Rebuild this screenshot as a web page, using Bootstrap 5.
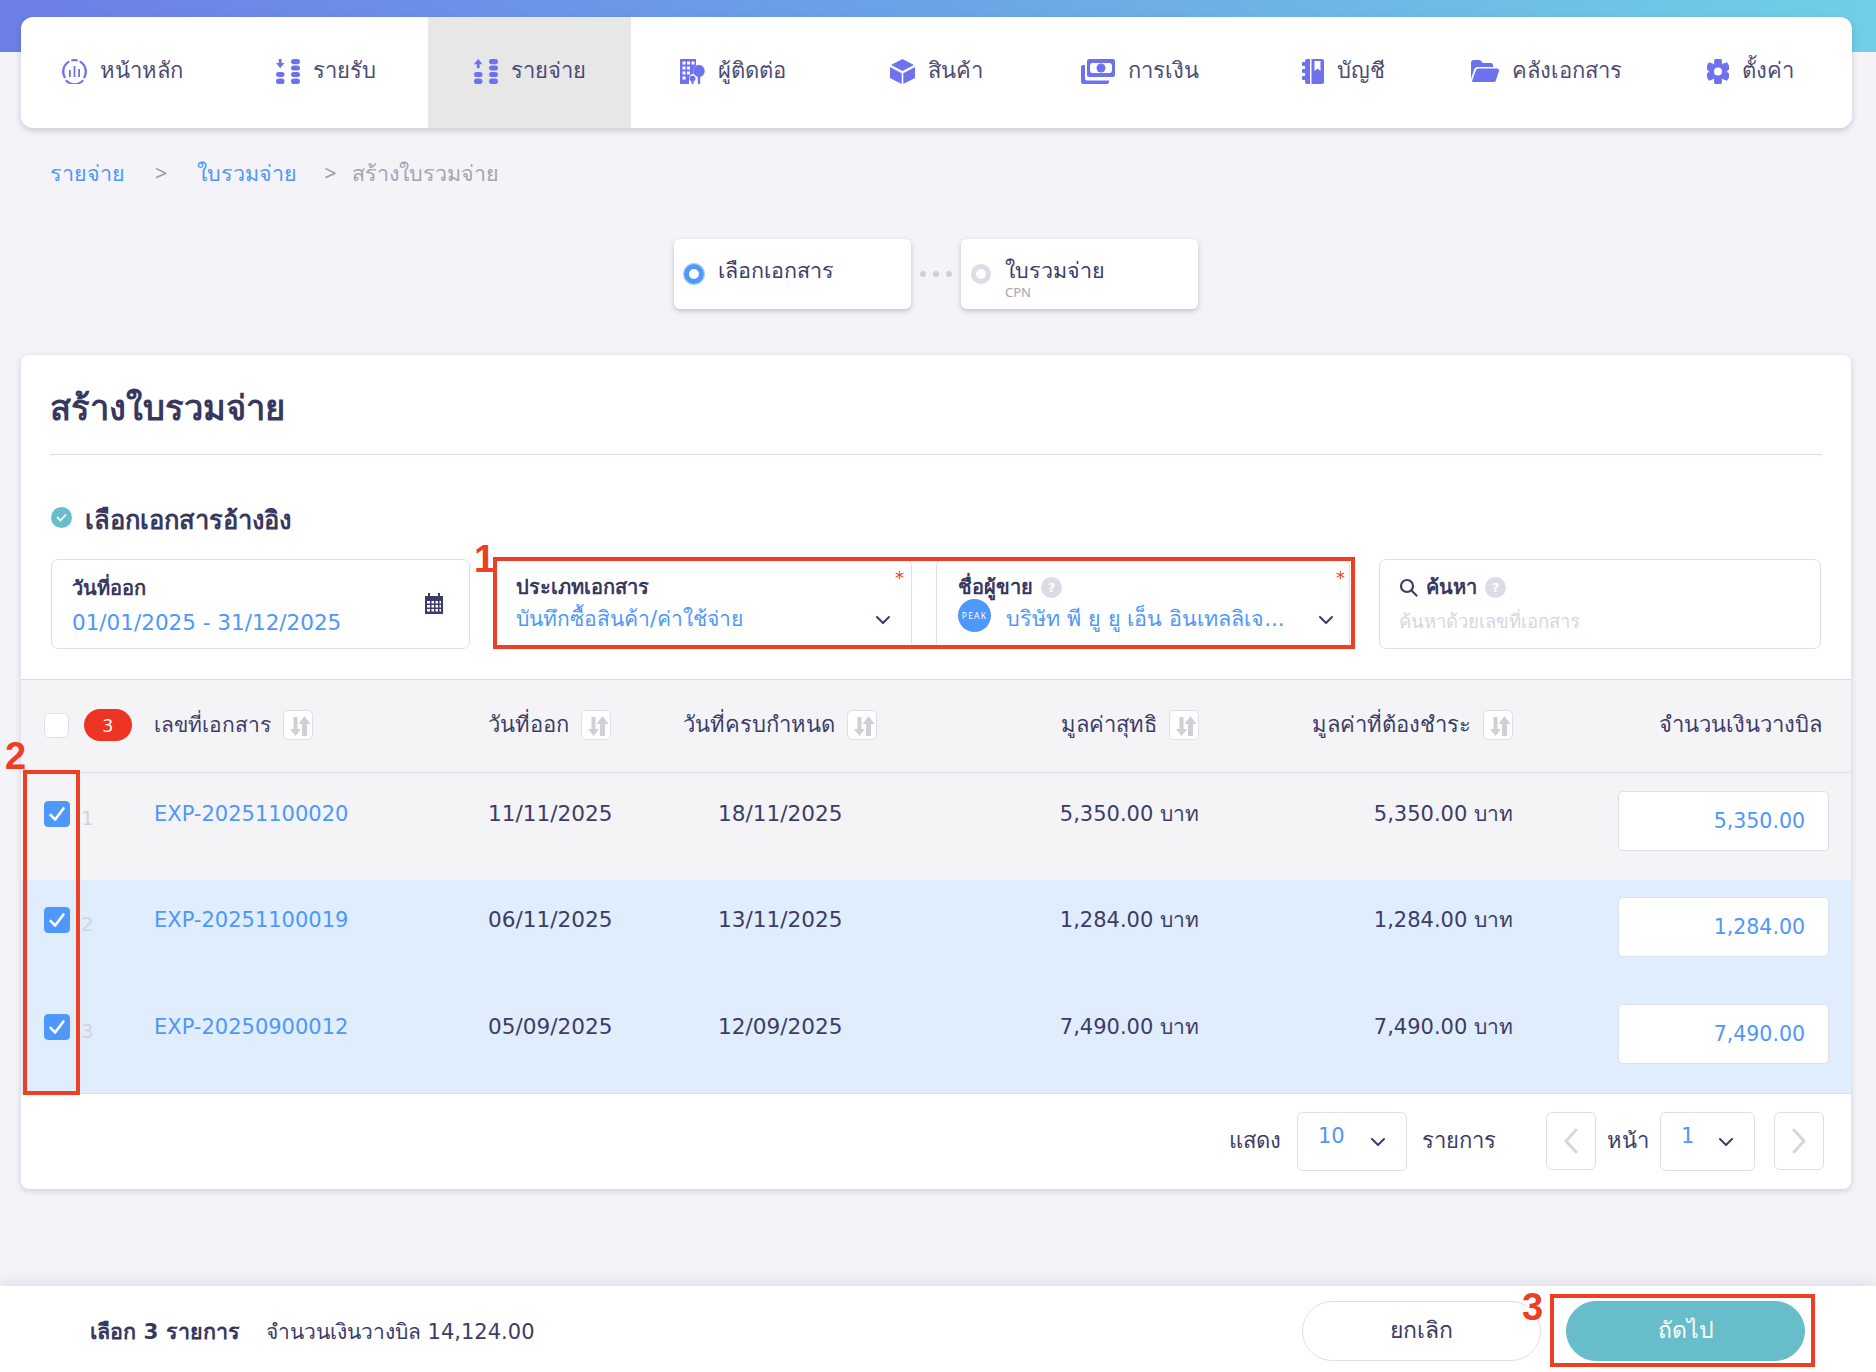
<!DOCTYPE html>
<html lang="th">
<head>
<meta charset="utf-8">
<title>สร้างใบรวมจ่าย</title>
<link href="https://cdn.jsdelivr.net/npm/bootstrap@5.3.0/dist/css/bootstrap.min.css" rel="stylesheet">
<style>
:root{--ink:#3c3c68;--blue:#4e97fb;--line:#dfdfe9;--bgp:#f3f3f8;--ann:#ee3e23;}
html,body{height:100%;}
body{font-family:"DejaVu Sans","Noto Sans","Liberation Sans",sans-serif;background:var(--bgp);color:var(--ink);font-size:21px;position:relative;overflow:hidden;line-height:30px;}
.page-wrap{height:1372px;}
.top-band{background:linear-gradient(90deg,#6c7ee8 0%,#6ba4e6 50%,#70cfe4 100%) no-repeat;background-size:100% 52px;padding:17px 24px 0 21px;}
.main-nav{height:111px;background:#fff;border-radius:12px;box-shadow:0 3px 6px rgba(60,60,100,.22);overflow:hidden;}
.nav-cell{flex:1 1 0;gap:13px;color:#4b4b74;font-size:22px;height:100%;padding-bottom:3px;}
.nav-cell.is-on{background:#e7e7e8;}
.nav-ico{fill:#6f72ef;display:block;}
.crumbs{font-family:"Noto Sans",sans-serif;padding:30px 0 0 29px;height:49px;box-sizing:content-box;margin-bottom:0;font-size:21.500px;}
.crumb-link{color:var(--blue);}
.crumb-sep{color:#9a9aac;margin:0 30px;}
.crumb-sep.tight{margin:0 15px 0 27px;}
.crumb-cur{color:#a4a4b4;}
.content{padding:0 25px 0 21px;}
.stepper{margin-top:32px;margin-bottom:46px;}
.step-box{width:237px;height:70px;background:#fff;border-radius:6px;box-shadow:0 2px 5px rgba(60,60,100,.28);padding:16px 10px;gap:14px;}
.step-dots{width:50px;gap:7px;}
.step-dots i{width:6px;height:6px;border-radius:50%;background:#cfcfd8;display:block;}
.step-dot{width:20px;height:20px;border-radius:50%;border:5px solid #dcdce6;flex:none;margin-top:9px;}
.step-dot.on{border-color:#4e97fb;box-shadow:0 0 0 1px #a9cdfc;}
.step-sub{font-family:"Noto Sans",sans-serif;font-size:13px;line-height:14px;color:#a4a4b4;}
.step-name{line-height:28px;font-size:21.500px;margin-top:2px;}
.doc-card{background:#fff;border-radius:8px;box-shadow:0 2px 6px rgba(60,60,100,.2);height:834px;overflow:hidden;}
.doc-head{margin:0 29px 0 29px;height:100px;border-bottom:1px solid #dcdce4;padding-top:28px;}
.doc-title{font-size:34.500px;font-weight:600;line-height:50px;margin:0;color:#38385f;}
.sec-head{padding:47px 0 0 30px;gap:13px;font-size:25.500px;font-weight:600;line-height:36px;height:104px;align-items:flex-start;color:#38385f;}
.sec-check{width:21px;height:21px;margin-top:5px;flex:none;}
.filter-row{height:120px;padding-left:30px;}
.f-box{height:90px;border:1px solid var(--line);border-radius:7px;position:relative;}
.f-date{width:419px;margin-right:25px;padding:13px 20px;}
.f-type{width:417px;margin-right:24px;padding:12px 20px;}
.f-vendor{width:414px;margin-right:29px;padding:12px 21px;}
.f-search{width:442px;padding:12px 19px;}
.f-label{font-size:20px;font-weight:600;line-height:30px;color:#38385f;}
.f-val{color:var(--blue);font-size:21px;line-height:32px;margin-top:1px;}
.f-date .f-val{font-size:21.500px;margin-top:4px;}
.req{position:absolute;right:7px;top:8px;color:var(--ann);font-size:18px;line-height:20px;}
.f-vendor .req{right:4px;}
.chev{fill:none;stroke:#3c3c68;stroke-width:2;stroke-linecap:round;stroke-linejoin:round;flex:none;}
.f-chev{position:absolute;right:20px;top:55px;}
.f-vendor .f-chev{right:15px;}
.f-cal{position:absolute;right:26px;top:33px;fill:#3c3c68;}
.help-dot{width:21px;height:21px;border-radius:50%;background:#dcdce6;color:#fff;font-size:13px;line-height:21px;text-align:center;display:inline-block;font-weight:700;flex:none;}
.peak-ava{width:33px;height:33px;border-radius:50%;background:var(--blue);color:#fff;font-family:"Noto Sans",sans-serif;font-size:8.500px;line-height:33px;text-align:center;flex:none;letter-spacing:1.200px;margin-top:-4px;}
.f-vendor .f-val{margin-top:1px;gap:15px;font-size:21.500px;height:32px;}
.ph{color:#d6d6e0;font-size:18.500px;line-height:30px;margin-top:5px;}
.grid-table{width:100%;table-layout:fixed;margin:0;border-collapse:collapse;--bs-table-bg:transparent;--bs-table-color:var(--ink);}
.grid-table th,.grid-table td{border:0;padding:0;background:transparent;box-shadow:none;font-weight:400;color:var(--ink);}
.c1{width:133px;}.c2{width:334px;}.c3{width:195px;}.c4{width:200px;}.c5{width:316px;}.c6{width:314px;}
.grid-table thead tr{height:93px;background:#f4f4f7;border-top:1px solid #dcdce4;border-bottom:1px solid #dcdce4;font-size:22px;}
.grid-table thead th{vertical-align:middle;}
.grid-table thead th > div{margin-top:-2px;}
.grid-table thead th.th-doc{font-size:21px;}
.grid-table tbody td{vertical-align:top;padding-top:26px;}
.grid-table tbody tr.row-a{background:#f4f4f7;height:107px;}
.grid-table tbody tr.row-b{background:#e0edfd;height:107px;}
.grid-table tbody tr.row-b td{padding-top:25px;}
.grid-table tbody tr:last-child{border-bottom:1px solid #dcdce4;}
.head-tick{width:25px;height:25px;margin:0;border:1px solid var(--line);border-radius:4px;}
.form-check-input.row-tick{width:26px;height:26px;margin:2px 0 0 0;border-radius:4px;background-color:#4e97fb;border-color:#4e97fb;}
.form-check-input.row-tick:checked{background-image:url("data:image/svg+xml,%3csvg xmlns='http://www.w3.org/2000/svg' viewBox='0 0 26 26'%3e%3cpath fill='none' stroke='%23fff' stroke-linecap='round' stroke-linejoin='round' stroke-width='2.800' d='M6 14l5 5 9-12'/%3e%3c/svg%3e");background-size:100% 100%;}
.cell-first{padding-left:23px !important;}
.count-pill{width:48px;height:32px;border-radius:16px;background:#ee3524;color:#fff;font-family:"Noto Sans",sans-serif;font-size:18px;line-height:32px;text-align:center;margin-left:-1px;}
.row-no{color:#d4d4d8;font-size:20px;margin-left:11px;line-height:34px;padding-top:2px;}
.doc-link{color:var(--blue);text-decoration:none;}
.sort-btn{width:30px;height:30px;border:1px solid var(--line);border-radius:5px;background:#fff;flex:none;}
.sort-btn svg{fill:#cfcfd4;display:block;}
.num-cell{text-align:right;}
.amt-cell{padding-right:22px !important;}
.grid-table thead th.amt-head{padding-right:29px;}
.date-val{font-size:21.600px;}
.due-val{display:inline-block;margin-left:35px;font-size:21.600px;}
.amt-field{width:211px;height:60px;margin-top:-8px;border:1px solid var(--line);border-radius:5px;background:#fff;color:var(--blue);text-align:right;font-size:20.500px;padding:0 23px;margin-left:auto;}
.pager{height:95px;padding:18px 27px 0 0;gap:15px;font-size:22px;}
.pg-lbl{padding-top:14px;}
.pg-lbl.tight{margin:0 -4px;}
.pg-select{height:59px;border:1px solid var(--line);border-radius:6px;position:relative;color:var(--blue);padding:8px 0 0 20px;font-size:21px;}
.pg-select .chev{position:absolute;right:20px;top:24px;}
.w-a{width:110px;margin:0 0 0 1px;}
.w-b{width:95px;}
.pg-arrow{width:50px;height:58px;border:1px solid var(--line);border-radius:6px;}
.pg-arrow svg{stroke:#d6d6e2;stroke-width:3;fill:none;stroke-linecap:round;stroke-linejoin:round;}
.m-l{margin-left:35px;}
.m-r{margin-left:4px;}
.foot{height:86px;background:#fff;margin-top:auto;box-shadow:0 -4px 12px rgba(60,60,80,.1);padding:15px 71px 0 90px;font-size:21px;}
.foot-txt{padding-top:16px;}
.foot b{font-weight:600;margin-right:26px;color:#38385f;font-size:21.500px;}
.pill-btn{width:239px;height:60px;border-radius:30px;font-size:23px;line-height:30px;padding:0 0 2px;}
.pill-off{background:#fff;border:1px solid var(--line);color:var(--ink);margin-right:25px;}
.pill-on{background:#67bdc9;border:1px solid #67bdc9;color:#fff;}
.ann-box{position:absolute;border:4px solid var(--ann);pointer-events:none;}
.ann-num{position:absolute;color:var(--ann);font-family:"Liberation Sans",sans-serif;font-weight:700;font-size:38px;line-height:38px;}
.b1{left:493px;top:557px;width:862px;height:92px;}
.b2{left:23px;top:770px;width:57px;height:325px;}
.b3{left:1550px;top:1294px;width:265px;height:73px;}
.n1{left:474px;top:540px;}
.n2{left:5px;top:737px;}
.n3{left:1522px;top:1288px;}
</style>
</head>
<body>
<svg width="0" height="0" class="position-absolute">
<defs>
<symbol id="sort" viewBox="0 0 30 30"><path d="M9.500 6h4v12h3.500l-5.500 7-5.500-7h3.500z"/><path d="M20.500 5l6 8h-3.500v12h-5v-12h-3.500z"/></symbol>
<symbol id="down" viewBox="0 0 16 10"><path d="M2 2l6 6 6-6"/></symbol>
<symbol id="coins-r" viewBox="0 0 9 25"><rect width="9" height="5.200" rx="2.600"/><rect y="6.600" width="9" height="5" rx="2.500"/><rect y="13" width="9" height="5" rx="2.500"/><rect y="19.400" width="9" height="5.600" rx="2.800"/></symbol>
</defs>
</svg>
<div class="page-wrap d-flex flex-column">
<div class="top-band">
<nav class="main-nav d-flex">
<a class="nav-cell d-flex align-items-center justify-content-center text-decoration-none">
<svg class="nav-ico" width="25" height="25" viewBox="0 0 25 25"><path d="M9 .5a12.500 12.500 0 0 1 7 0l-.5 2a10.500 10.500 0 0 0-6 0zM6.800 1.400l1 1.900A10.500 10.500 0 0 0 2.500 13.500 10 10 0 0 0 4 18.500l-1.800 1A12.500 12.500 0 0 1 6.800 1.400zM18.200 1.400A12.500 12.500 0 0 1 22.800 19.500l-1.800-1a10 10 0 0 0 1.500-5 10.500 10.500 0 0 0-5.300-10.200zM4.500 20.500a10.500 10.500 0 0 0 16 0l1.400 1.500a12.500 12.500 0 0 1-18.800 0z"/><path d="M7 11h1.800v7H7zM11.600 7h1.800v11h-1.800zM16.200 10h1.800v8h-1.800z"/></svg>
<span>หน้าหลัก</span></a>
<a class="nav-cell d-flex align-items-center justify-content-center text-decoration-none">
<svg class="nav-ico" width="24" height="25" viewBox="0 0 24 25"><path d="M2.800 0h2.800v4H8.500L4.200 9.300 0 4h2.800z"/><rect y="13" width="8.500" height="5" rx="2.500"/><rect y="19.400" width="8.500" height="5.600" rx="2.800"/><svg x="15" width="9" height="25"><use href="#coins-r"/></svg></svg>
<span>รายรับ</span></a>
<a class="nav-cell is-on d-flex align-items-center justify-content-center text-decoration-none">
<svg class="nav-ico" width="24" height="25" viewBox="0 0 24 25"><path d="M4.200 0l4.300 5.300H5.600v4H2.800v-4H0z"/><rect y="13" width="8.500" height="5" rx="2.500"/><rect y="19.400" width="8.500" height="5.600" rx="2.800"/><svg x="15" width="9" height="25"><use href="#coins-r"/></svg></svg>
<span>รายจ่าย</span></a>
<a class="nav-cell d-flex align-items-center justify-content-center text-decoration-none">
<svg class="nav-ico" width="25" height="25" viewBox="0 0 25 25"><path fill-rule="evenodd" d="M0 0h16v6.500a6 6 0 0 0-1.500 8.500A4.500 4.500 0 0 0 9 19.500V25H0zM2.500 2.500v3h3v-3zm4.500 0v3h3v-3zm4.500 0v3h3v-3zM2.500 7.500v3h3v-3zm4.500 0v3h3v-3zM2.500 12.500v3h3v-3zm4.500 0v3h3v-3zM2.500 17.500v3h3v-3z"/><path d="M19 6a5.500 6 0 0 1 1.200 11.900V25h-2.400v-7.100A5.500 6 0 0 1 19 6z"/><path d="M12.500 16.500a3.200 3.200 0 0 1 1 6.200V25h-2v-2.300a3.200 3.200 0 0 1 1-6.200z"/></svg>
<span>ผู้ติดต่อ</span></a>
<a class="nav-cell d-flex align-items-center justify-content-center text-decoration-none">
<svg class="nav-ico" width="25" height="25" viewBox="0 0 25 25"><path d="M12.500 0l11.500 6-11.500 6L1 6z"/><path d="M0 8l11.700 6.200V25L0 19z"/><path d="M25 8l-11.700 6.200V25L25 19z"/></svg>
<span>สินค้า</span></a>
<a class="nav-cell d-flex align-items-center justify-content-center text-decoration-none">
<svg class="nav-ico" width="34" height="25" viewBox="0 0 34 25"><path fill-rule="evenodd" d="M8 0h24a2 2 0 0 1 2 2v14a2 2 0 0 1-2 2H8a2 2 0 0 1-2-2V2a2 2 0 0 1 2-2zm3 4q-1.500 0-2 2.500v5q.5 2.500 2 2.500h18q1.500 0 2-2.500v-5Q30.500 4 29 4z"/><circle cx="20" cy="9" r="4.500"/><path d="M0 8a2 2 0 0 1 2-2h2v13.500a2 2 0 0 0 2 2h22V23a2 2 0 0 1-2 2H2a2 2 0 0 1-2-2z"/></svg>
<span>การเงิน</span></a>
<a class="nav-cell d-flex align-items-center justify-content-center text-decoration-none">
<svg class="nav-ico" width="22" height="25" viewBox="0 0 22 25"><path d="M0 4a1 1 0 0 1 1-1h3v4H1a1 1 0 0 1-1-1zM0 11a1 1 0 0 1 1-1h3v4H1a1 1 0 0 1-1-1zM0 18a1 1 0 0 1 1-1h3v4H1a1 1 0 0 1-1-1z"/><path d="M3 2a2 2 0 0 1 2-2h3v25H5a2 2 0 0 1-2-2z"/><path fill-rule="evenodd" d="M9.500 0H20a2 2 0 0 1 2 2v21a2 2 0 0 1-2 2H9.500zM12.500 2v10l3-2.500 3 2.500V2z"/></svg>
<span>บัญชี</span></a>
<a class="nav-cell d-flex align-items-center justify-content-center text-decoration-none">
<svg class="nav-ico" width="28" height="22" viewBox="0 0 28 22"><path d="M0 3a3 3 0 0 1 3-3h6l3 3h8a2 2 0 0 1 2 2v2H7a4 4 0 0 0-4 3L0 19z"/><path d="M5 10a2 2 0 0 1 2-1.500h19a2 2 0 0 1 2 2.500l-3 9a2 2 0 0 1-2 2H2a1 1 0 0 1-1-1z"/></svg>
<span>คลังเอกสาร</span></a>
<a class="nav-cell d-flex align-items-center justify-content-center text-decoration-none">
<svg class="nav-ico" width="22" height="25" viewBox="0 0 22 25"><path d="M7.500 0h7l.7 4.500h-8.400zM7.500 25h7l.7-4.500h-8.400z"/><path d="M7.500 0h7l.7 4.500h-8.400zM7.500 25h7l.7-4.500h-8.400z" transform="rotate(60 11 12.500)"/><path d="M7.500 0h7l.7 4.500h-8.400zM7.500 25h7l.7-4.500h-8.400z" transform="rotate(120 11 12.500)"/><circle cx="11" cy="12.500" r="9"/><circle cx="11" cy="12.500" r="4" fill="#fff"/></svg>
<span>ตั้งค่า</span></a>
</nav>
</div>
<div class="content">
<div class="crumbs"><span class="crumb-link">รายจ่าย</span><span class="crumb-sep">&gt;</span><span class="crumb-link">ใบรวมจ่าย</span><span class="crumb-sep tight">&gt;</span><span class="crumb-cur">สร้างใบรวมจ่าย</span></div>
<div class="stepper d-flex justify-content-center align-items-center">
<div class="step-box d-flex"><span class="step-dot on"></span><div><div class="step-name">เลือกเอกสาร</div></div></div>
<div class="step-dots d-flex justify-content-center"><i></i><i></i><i></i></div>
<div class="step-box d-flex"><span class="step-dot"></span><div><div class="step-name">ใบรวมจ่าย</div><div class="step-sub">CPN</div></div></div>
</div>
<section class="doc-card">
<div class="doc-head"><h1 class="doc-title">สร้างใบรวมจ่าย</h1></div>
<div class="sec-head d-flex">
<svg class="sec-check" viewBox="0 0 21 21"><circle cx="10.500" cy="10.500" r="10.500" fill="#67bdc9"/><path d="M6.500 10.500l3 3 5-5.500" fill="none" stroke="#fff" stroke-width="1.800" stroke-linecap="round" stroke-linejoin="round"/></svg>
<span>เลือกเอกสารอ้างอิง</span></div>
<div class="filter-row d-flex">
<div class="f-box f-date"><div class="f-label">วันที่ออก</div><div class="f-val">01/01/2025 - 31/12/2025</div>
<svg class="f-cal" width="18" height="21" viewBox="0 0 18 21"><path fill-rule="evenodd" d="M3 0h2v3H3zM13 0h2v3h-2zM0 3h18v18H0zM2 8v2.500h3V8zm4.500 0v2.500h2.500V8zm4 0v2.500h2.500V8zM14.500 8v2.500H16V8zM2 12v2.500h3V12zm4.500 0v2.500h2.500V12zm4 0v2.500h2.500V12zM14.500 12v2.500H16V12zM2 16v2.500h3V16zm4.500 0v2.500h2.500V16zm4 0v2.500h2.500V16zM14.500 16v2.500H16V16z"/></svg></div>
<div class="f-box f-type"><div class="f-label">ประเภทเอกสาร</div><div class="f-val">บันทึกซื้อสินค้า/ค่าใช้จ่าย</div><span class="req">*</span><svg class="chev f-chev" width="16" height="10"><use href="#down"/></svg></div>
<div class="f-box f-vendor"><div class="f-label d-flex align-items-center gap-2">ชื่อผู้ขาย <span class="help-dot">?</span></div><div class="f-val d-flex"><span class="peak-ava">PEAK</span><span>บริษัท พี ยู ยู เอ็น อินเทลลิเจ...</span></div><span class="req">*</span><svg class="chev f-chev" width="16" height="10"><use href="#down"/></svg></div>
<div class="f-box f-search"><div class="f-label d-flex align-items-center gap-2"><svg width="19" height="19" viewBox="0 0 19 19" fill="none" stroke="#3c3c68" stroke-width="2.200" stroke-linecap="round"><circle cx="8" cy="8" r="6"/><path d="M12.500 12.500l5 5"/></svg>ค้นหา <span class="help-dot">?</span></div><div class="ph">ค้นหาด้วยเลขที่เอกสาร</div></div>
</div>
<table class="table grid-table">
<colgroup><col class="c1"><col class="c2"><col class="c3"><col class="c4"><col class="c5"><col class="c6"><col></colgroup>
<thead><tr>
<th class="cell-first"><div class="d-flex align-items-center gap-3"><input class="form-check-input head-tick" type="checkbox" aria-label="เลือกทั้งหมด"><span class="count-pill">3</span></div></th>
<th class="th-doc"><div class="d-flex align-items-center gap-2">เลขที่เอกสาร <span class="sort-btn ms-1"><svg width="30" height="30"><use href="#sort"/></svg></span></div></th>
<th><div class="d-flex align-items-center gap-2">วันที่ออก <span class="sort-btn ms-1"><svg width="30" height="30"><use href="#sort"/></svg></span></div></th>
<th><div class="d-flex align-items-center gap-2">วันที่ครบกำหนด <span class="sort-btn ms-1"><svg width="30" height="30"><use href="#sort"/></svg></span></div></th>
<th><div class="d-flex align-items-center justify-content-end gap-2">มูลค่าสุทธิ <span class="sort-btn ms-1"><svg width="30" height="30"><use href="#sort"/></svg></span></div></th>
<th><div class="d-flex align-items-center justify-content-end gap-2">มูลค่าที่ต้องชำระ <span class="sort-btn ms-1"><svg width="30" height="30"><use href="#sort"/></svg></span></div></th>
<th class="num-cell amt-head"><div>จำนวนเงินวางบิล</div></th>
</tr></thead>
<tbody>
<tr class="row-a"><td class="cell-first"><div class="d-flex"><input class="form-check-input row-tick" type="checkbox" checked aria-label="1"><span class="row-no">1</span></div></td><td><a class="doc-link">EXP-20251100020</a></td><td class="date-val">11/11/2025</td><td><span class="due-val">18/11/2025</span></td><td class="num-cell">5,350.00 บาท</td><td class="num-cell">5,350.00 บาท</td><td class="amt-cell"><input class="form-control amt-field" value="5,350.00" aria-label="จำนวนเงิน"></td></tr>
<tr class="row-b"><td class="cell-first"><div class="d-flex"><input class="form-check-input row-tick" type="checkbox" checked aria-label="2"><span class="row-no">2</span></div></td><td><a class="doc-link">EXP-20251100019</a></td><td class="date-val">06/11/2025</td><td><span class="due-val">13/11/2025</span></td><td class="num-cell">1,284.00 บาท</td><td class="num-cell">1,284.00 บาท</td><td class="amt-cell"><input class="form-control amt-field" value="1,284.00" aria-label="จำนวนเงิน"></td></tr>
<tr class="row-b"><td class="cell-first"><div class="d-flex"><input class="form-check-input row-tick" type="checkbox" checked aria-label="3"><span class="row-no">3</span></div></td><td><a class="doc-link">EXP-20250900012</a></td><td class="date-val">05/09/2025</td><td><span class="due-val">12/09/2025</span></td><td class="num-cell">7,490.00 บาท</td><td class="num-cell">7,490.00 บาท</td><td class="amt-cell"><input class="form-control amt-field" value="7,490.00" aria-label="จำนวนเงิน"></td></tr>
</tbody>
</table>
<div class="pager d-flex justify-content-end align-items-start">
<span class="pg-lbl">แสดง</span>
<div class="pg-select w-a">10<svg class="chev" width="16" height="10"><use href="#down"/></svg></div>
<span class="pg-lbl">รายการ</span>
<div class="pg-arrow m-l d-flex align-items-center justify-content-center"><svg width="14" height="26" viewBox="0 0 14 26"><path d="M12 2L2 13l10 11"/></svg></div>
<span class="pg-lbl tight">หน้า</span>
<div class="pg-select w-b">1<svg class="chev" width="16" height="10"><use href="#down"/></svg></div>
<div class="pg-arrow m-r d-flex align-items-center justify-content-center"><svg width="14" height="26" viewBox="0 0 14 26"><path d="M2 2l10 11L2 24"/></svg></div>
</div>
</section>
</div>
<footer class="foot d-flex justify-content-between align-items-start">
<div class="foot-txt"><b>เลือก 3 รายการ</b>จำนวนเงินวางบิล 14,124.00</div>
<div class="d-flex"><button class="btn pill-btn pill-off" type="button">ยกเลิก</button><button class="btn pill-btn pill-on" type="button">ถัดไป</button></div>
</footer>
</div>
<div class="ann-box b1"></div><div class="ann-box b2"></div><div class="ann-box b3"></div>
<div class="ann-num n1">1</div><div class="ann-num n2">2</div><div class="ann-num n3">3</div>
<script src="https://cdn.jsdelivr.net/npm/bootstrap@5.3.0/dist/js/bootstrap.bundle.min.js"></script>
</body>
</html>
